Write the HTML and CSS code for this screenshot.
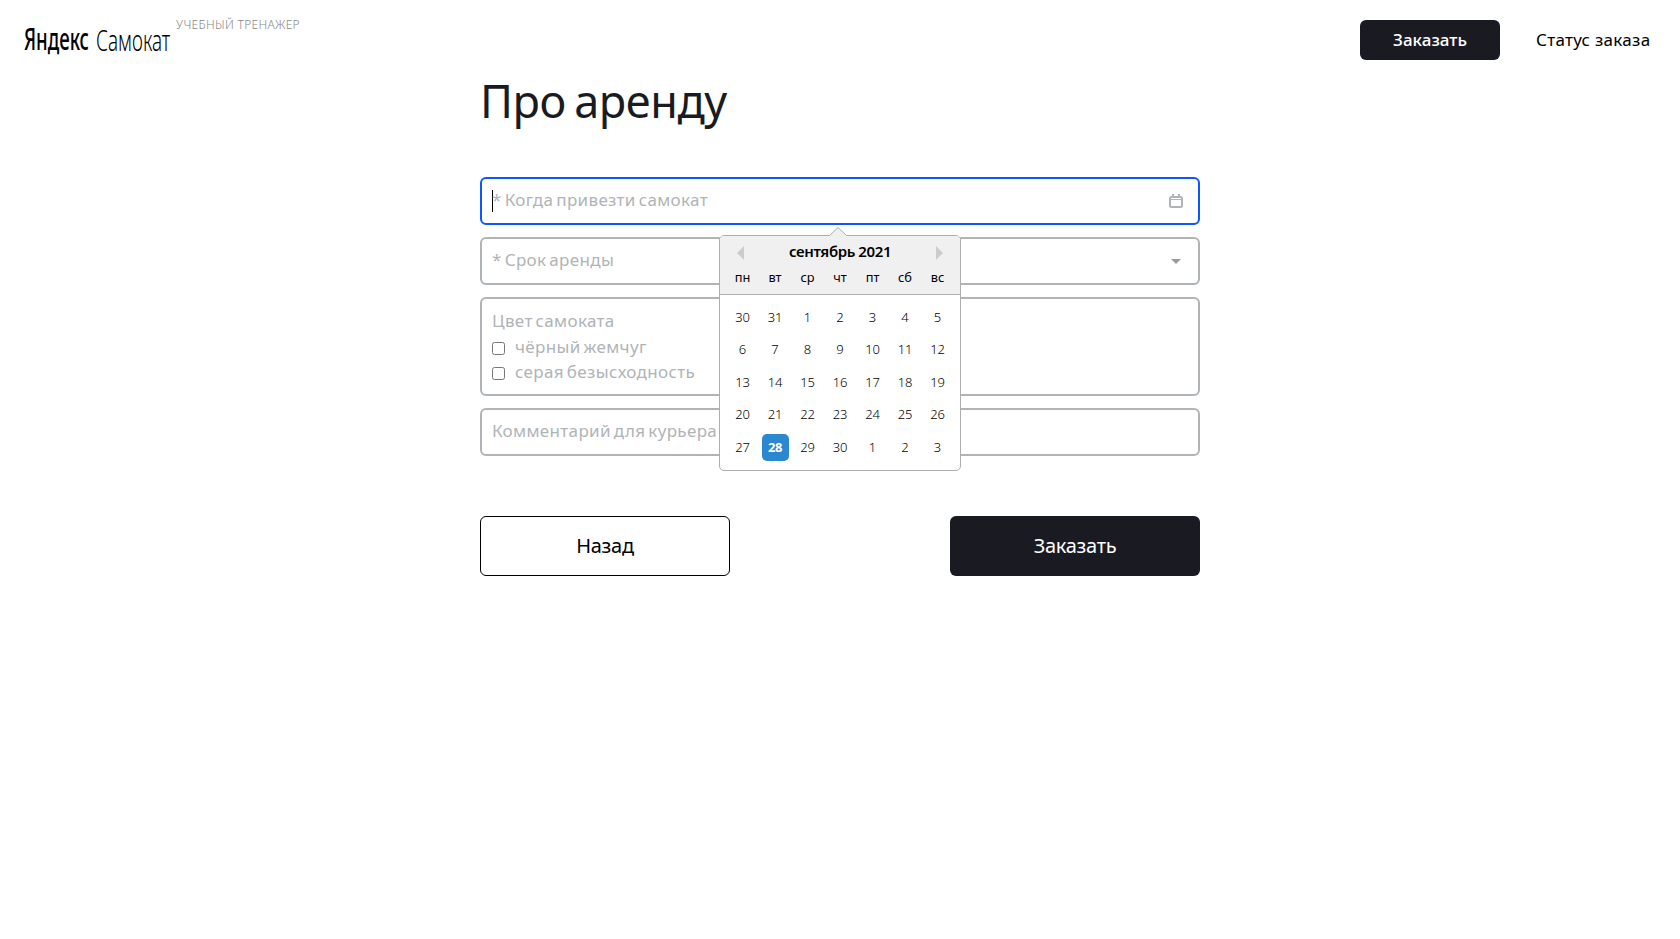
FILE: index.html
```html
<!DOCTYPE html>
<html lang="ru">
<head>
<meta charset="utf-8">
<title>Яндекс Самокат</title>
<link rel="stylesheet" href="styles.css">
</head>
<body>
<header class="header">
  <div class="logo"><span class="logo-bold">Яндекс</span><span class="logo-thin">Самокат</span></div>
  <span class="disclaimer">Учебный тренажер</span>
  <nav class="nav">
    <button class="btn btn-small">Заказать</button>
    <a class="status">Статус заказа</a>
  </nav>
</header>
<main class="order">
  <h1 class="title">Про аренду</h1>
  <form class="form">
    <div class="field field-active">
      <span class="caret"></span>
      <span class="label">* Когда привезти самокат</span>
      <svg class="icon-date" width="14" height="14" viewBox="0 0 14 14"><rect x="1" y="3" width="12" height="10" rx="1.500" fill="none" stroke="#b0b4b7" stroke-width="2"/><path d="M1 5.500h12" stroke="#b0b4b7" stroke-width="1"/><path d="M4 0v3M10 0v3" stroke="#b0b4b7" stroke-width="2"/></svg>
      <div class="calendar">
        <svg class="pointer" width="18" height="9" viewBox="0 0 18 9"><path d="M0 9 9 0l9 9z" fill="#f0f0f0"/><path d="M.5 8.500 9 .5l8.500 8" fill="none" stroke="#aeaeae"/></svg>
        <div class="cal-head">
          <div class="cal-title"><i class="arrow-left"></i><b class="month">сентябрь 2021</b><i class="arrow-right"></i></div>
          <div class="week"><span>пн</span><span>вт</span><span>ср</span><span>чт</span><span>пт</span><span>сб</span><span>вс</span></div>
        </div>
        <div class="days">
          <span>30</span><span>31</span><span>1</span><span>2</span><span>3</span><span>4</span><span>5</span>
          <span>6</span><span>7</span><span>8</span><span>9</span><span>10</span><span>11</span><span>12</span>
          <span>13</span><span>14</span><span>15</span><span>16</span><span>17</span><span>18</span><span>19</span>
          <span>20</span><span>21</span><span>22</span><span>23</span><span>24</span><span>25</span><span>26</span>
          <span>27</span><span class="today">28</span><span>29</span><span>30</span><span>1</span><span>2</span><span>3</span>
        </div>
      </div>
    </div>
    <div class="field"><span class="label">* Срок аренды</span><i class="arrow-down"></i></div>
    <div class="colors">
      <div class="label color-title">Цвет самоката</div>
      <label class="check"><input type="checkbox"><span class="label">чёрный жемчуг</span></label>
      <label class="check"><input type="checkbox"><span class="label">серая безысходность</span></label>
    </div>
    <div class="field"><span class="label">Комментарий для курьера</span></div>
  </form>
  <div class="actions">
    <button class="btn btn-large btn-outline">Назад</button>
    <button class="btn btn-large">Заказать</button>
  </div>
</main>
</body>
</html>
```
FILE: styles.css
```css
* { box-sizing: border-box; }
body { margin: 0; background: #fff; color: #1a1b22; font-family: "Noto Sans", sans-serif; overflow: hidden; }
.header { height: 80px; display: flex; align-items: flex-start; padding: 20px 30px 0 24px; }
.logo { display: flex; flex: none; width: 151px; margin-top: -1px; color: #000; line-height: 42px; }
.logo span { transform-origin: 0 0; white-space: nowrap; flex: none; }
.logo-bold { width: 72px; font-size: 30px; font-weight: 500; transform: translateY(-1px) scaleX(.620); }
.logo-thin { width: 79px; font-size: 30px; font-weight: 300; transform: scaleX(.630); }
.disclaimer { margin-left: 1px; margin-top: -4px; font-size: 12px; line-height: 17px; letter-spacing: .31px; font-weight: 300; color: #888; text-transform: uppercase; white-space: nowrap; }
.nav { margin-left: auto; display: flex; align-items: center; gap: 36px; }
.btn { border: 0; border-radius: 6px; background: #1a1b22; color: #fff; font-family: inherit; padding: 0; }
.btn-small { width: 140px; height: 40px; padding-bottom: 2px; font-size: 17px; font-weight: 500; }
.status { width: 114px; padding-bottom: 2px; font-size: 17px; letter-spacing: .3px; color: #000; white-space: nowrap; }
.order { width: 720px; margin: 0 auto; }
.title { margin: 0; height: 97px; font-size: 45px; line-height: 41px; letter-spacing: -.4px; word-spacing: -3px; font-weight: 400; white-space: nowrap; }
.form { display: flex; flex-direction: column; gap: 12px; }
.field { position: relative; height: 48px; display: flex; align-items: center; border: 2px solid #b0b4b7; border-radius: 6px; padding: 0 15px 0 10px; }
.field-active { border-color: #0d57ff; }
.label { font-size: 17px; line-height: 24px; letter-spacing: .34px; word-spacing: -1.800px; color: #b0b4b7; white-space: nowrap; }
.field .label { padding-bottom: 2px; }
.caret { width: 1px; height: 22px; background: #000; margin-right: -1px; }
.icon-date { margin: 0 0 1px auto; }
.arrow-down { margin-left: auto; margin-right: 2px; border: 5px solid transparent; border-top-color: #999; border-bottom: 0; }
.colors { height: 99px; border: 2px solid #b0b4b7; border-radius: 6px; padding: 10px 10px 0; }
.color-title { height: 25px; }
.check { display: flex; align-items: center; height: 25px; }
.check input { margin: 3px 10px 0 0; width: 13px; height: 13px; }
.calendar { position: absolute; z-index: 2; left: 237px; top: 56px; width: 242px; height: 236px; background: #fff; border: 1px solid #aeaeae; border-radius: 5px; color: #000; }
.pointer { position: absolute; left: 108.500px; top: -9px; }
.cal-head { height: 59px; background: #f0f0f0; border-bottom: 1px solid #aeaeae; border-radius: 4px 4px 0 0; }
.cal-title { display: flex; align-items: center; justify-content: space-between; height: 34px; padding: 0 17px; }
.month { padding-bottom: 4px; font-size: 15px; font-weight: 600; letter-spacing: -.4px; white-space: nowrap; }
.arrow-left { border: 7px solid transparent; border-right-color: #ccc; border-left: 0; }
.arrow-right { border: 7px solid transparent; border-left-color: #ccc; border-right: 0; }
.week, .days { display: grid; grid-template-columns: repeat(7, 27px); column-gap: 5.500px; justify-content: center; text-align: center; font-size: 12.800px; }
.week { line-height: 14px; }
.days { padding-top: 8.500px; row-gap: 5.500px; line-height: 27px; font-size: 13px; font-weight: 300; letter-spacing: -.1px; }
.today { background: #2a87d0; color: #fff; font-weight: 700; letter-spacing: -.4px; border-radius: 5px; }
.actions { display: flex; justify-content: space-between; margin-top: 60px; }
.btn-large { width: 250px; height: 60px; padding-bottom: 2px; font-size: 20px; letter-spacing: -.3px; }
.btn-outline { background: #fff; color: #000; border: 1px solid #000; }
```
